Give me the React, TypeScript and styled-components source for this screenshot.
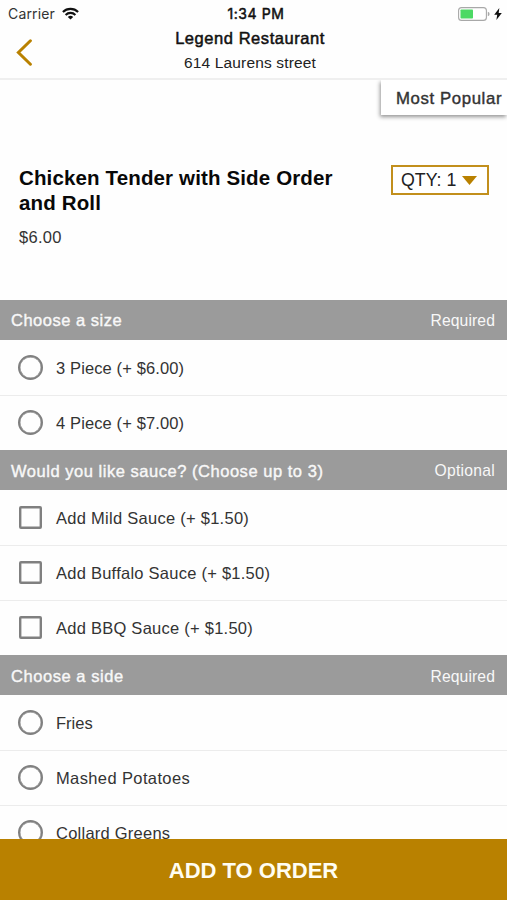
import React from "react";
import styled, { createGlobalStyle } from "styled-components";

const GOLD = "#b98100";

const GlobalStyle = createGlobalStyle`
  * { box-sizing: border-box; }
  body { margin: 0; background: #fff; overflow: hidden; }
`;

const Screen = styled.div`
  width: 507px;
  height: 900px;
  display: flex;
  flex-direction: column;
  overflow: hidden;
  background: #fefefe;
  font-family: "Liberation Sans", Arial, sans-serif;
  color: #333;
`;

const Text = styled.span<{ $size: number; $track?: number; $weight?: number; $color?: string }>`
  font-size: ${(p) => p.$size}px;
  line-height: 20px;
  letter-spacing: ${(p) => p.$track ?? 0}px;
  color: ${(p) => p.$color ?? "#333"};
  -webkit-text-stroke: ${(p) => p.$weight ?? 0}px currentColor;
  white-space: nowrap;
`;

const TopBar = styled.header`
  flex: none;
  height: 80px;
  border-bottom: 2px solid #efefef;
`;

const StatusBar = styled.div`
  height: 27px;
  display: grid;
  grid-template-columns: 1fr auto 1fr;
  align-items: center;
  padding: 0 5px 0 8px;
  font-family: Inter, sans-serif;
`;

const StatusGroup = styled.div<{ $end?: boolean }>`
  display: flex;
  align-items: center;
  gap: ${(p) => (p.$end ? 4 : 7)}px;
  justify-content: ${(p) => (p.$end ? "flex-end" : "flex-start")};
`;

const Clock = styled(Text)`
  padding-left: 2px;
`;

const NavBar = styled.div`
  height: 51px;
  display: grid;
  grid-template-columns: 60px 1fr 67px;
`;

const BackButton = styled.button`
  border: 0;
  background: none;
  padding: 12px 0 0 15px;
  display: flex;
  align-items: flex-start;
`;

const Titles = styled.div`
  display: flex;
  flex-direction: column;
  align-items: center;
  gap: 5px;
  padding-top: 1px;
`;

const Content = styled.main`
  flex: 1;
  min-height: 0;
  overflow: hidden;
`;

const Intro = styled.section`
  height: 220px;
  display: flex;
  flex-direction: column;
`;

const CategoryTab = styled.div`
  align-self: flex-end;
  width: 126px;
  height: 35px;
  padding: 9px 0 0 15px;
  display: flex;
  background: #fff;
  box-shadow: -1px 2px 4px rgba(0, 0, 0, 0.42);
  clip-path: inset(0 0 -10px -10px);
`;

const ItemRow = styled.div`
  display: flex;
  justify-content: space-between;
  align-items: flex-start;
  padding: 50px 18px 0 19px;
`;

const ItemInfo = styled.div`
  display: flex;
  flex-direction: column;
  padding-top: 1px;
`;

const ItemName = styled.h1`
  margin: 0 0 12px;
  font-size: 20.5px;
  line-height: 24.5px;
  font-weight: 700;
  letter-spacing: 0.14px;
  color: #080808;
`;

const Quantity = styled.button`
  width: 98px;
  height: 30px;
  padding: 0 0 0 8px;
  border: 2px solid #c28f1c;
  background: #fff;
  font-family: inherit;
  display: flex;
  align-items: center;
  gap: 6px;
`;

const GroupHeader = styled.div<{ $drop: number }>`
  height: 40px;
  padding: ${(p) => p.$drop}px 12px 0 11px;
  display: flex;
  align-items: center;
  justify-content: space-between;
  background: #9b9b9b;
`;

const GroupNote = styled(Text)`
  padding-top: 1px;
`;

const Option = styled.label`
  height: 55px;
  padding-left: 18px;
  display: flex;
  align-items: center;
  gap: 13px;
  & + & { box-shadow: inset 0 1px #ececec; }
`;

const Control = styled.span<{ $round: boolean }>`
  width: ${(p) => (p.$round ? 25 : 23)}px;
  height: ${(p) => (p.$round ? 25 : 23)}px;
  margin: ${(p) => (p.$round ? 0 : "0 1px")};
  border: 2px solid #808080;
  box-shadow: inset 0 0 0 0.4px #808080;
  border-radius: ${(p) => (p.$round ? "50%" : "2px")};
`;

const OptionText = styled(Text)`
  padding-top: 1px;
`;

const OrderButton = styled.button`
  flex: none;
  height: 61px;
  border: 0;
  padding: 2px 0 0;
  background: ${GOLD};
  color: #fffdf2;
  font: 700 22px/24px "Liberation Sans", Arial, sans-serif;
`;

type OptionItem = { label: string; track: number };
type Group = { title: string; track: number; drop: number; note: string; noteTrack: number; round: boolean; options: OptionItem[] };

const groups: Group[] = [
  {
    title: "Choose a size", track: 0.5, drop: 0, note: "Required", noteTrack: 0.1, round: true,
    options: [
      { label: "3 Piece (+ $6.00)", track: 0.12 },
      { label: "4 Piece (+ $7.00)", track: 0.12 },
    ],
  },
  {
    title: "Would you like sauce? (Choose up to 3)", track: 0.53, drop: 1, note: "Optional", noteTrack: 0.25, round: false,
    options: [
      { label: "Add Mild Sauce (+ $1.50)", track: 0.27 },
      { label: "Add Buffalo Sauce (+ $1.50)", track: 0.25 },
      { label: "Add BBQ Sauce (+ $1.50)", track: 0.25 },
    ],
  },
  {
    title: "Choose a side", track: 0.55, drop: 2, note: "Required", noteTrack: 0.1, round: true,
    options: [
      { label: "Fries", track: 0 },
      { label: "Mashed Potatoes", track: 0.38 },
      { label: "Collard Greens", track: 0.24 },
    ],
  },
];

const WifiIcon = () => (
  <svg width="17" height="13" viewBox="0 0 17 13" fill="none" stroke="#111" strokeWidth="2.1">
    <path d="M0.9 5a10.8 10.8 0 0 1 15.2 0" />
    <path d="M3.6 7.9a7 7 0 0 1 9.8 0" />
    <path d="M8.5 12.6 5.8 10a3.9 3.9 0 0 1 5.4 0Z" fill="#111" stroke="none" />
  </svg>
);

const BatteryIcon = () => (
  <svg width="32" height="14" viewBox="0 0 32 14">
    <rect x="0.6" y="0.6" width="27.8" height="12.8" rx="3" fill="#fff" stroke="#a8a8a8" strokeWidth="1.1" />
    <rect x="2.5" y="2.5" width="12.5" height="9" rx="0.8" fill="#4cd964" />
    <path d="M29.8 4.8q1.8.5 1.8 2.2t-1.8 2.2z" fill="#a8a8a8" />
  </svg>
);

const BoltIcon = () => (
  <svg width="8" height="12" viewBox="0 0 8 12">
    <path d="M5.3 0 0.2 6.8h3L2.4 12 7.8 4.9H4.7z" fill="#111" />
  </svg>
);

export default function App() {
  return (
    <Screen>
      <GlobalStyle />
      <TopBar>
        <StatusBar>
          <StatusGroup>
            <Text $size={14} $track={0.15}>Carrier</Text>
            <WifiIcon />
          </StatusGroup>
          <Clock $size={14} $weight={0.5} $track={0.6} $color="#111">1:34 PM</Clock>
          <StatusGroup $end>
            <BatteryIcon />
            <BoltIcon />
          </StatusGroup>
        </StatusBar>
        <NavBar>
          <BackButton aria-label="Back">
            <svg width="18" height="28" viewBox="0 0 18 28" fill="none" stroke={GOLD} strokeWidth="3">
              <path d="M15.4 1.8 3.4 13.5 15.4 25.2" strokeLinecap="round" />
            </svg>
          </BackButton>
          <Titles>
            <Text $size={16.5} $weight={0.5} $track={0.55} $color="#111">Legend Restaurant</Text>
            <Text $size={15.5} $track={0.15} $color="#222">614 Laurens street</Text>
          </Titles>
        </NavBar>
      </TopBar>
      <Content>
        <Intro>
          <CategoryTab>
            <Text $size={16.8} $weight={0.4} $track={0.6}>Most Popular</Text>
          </CategoryTab>
          <ItemRow>
            <ItemInfo>
              <ItemName>Chicken Tender with Side Order<br />and Roll</ItemName>
              <Text $size={16.5} $track={0.3}>$6.00</Text>
            </ItemInfo>
            <Quantity>
              <Text $size={17.8} $color="#222">QTY: 1</Text>
              <svg width="15" height="9" viewBox="0 0 15 9"><path d="M0 0h15L7.5 9z" fill={GOLD} /></svg>
            </Quantity>
          </ItemRow>
        </Intro>
        {groups.map((g) => (
          <section key={g.title}>
            <GroupHeader $drop={g.drop}>
              <Text $size={16.5} $weight={0.4} $track={g.track} $color="#f8f8f8">{g.title}</Text>
              <GroupNote $size={15.7} $track={g.noteTrack} $color="#f8f8f8">{g.note}</GroupNote>
            </GroupHeader>
            {g.options.map((o) => (
              <Option key={o.label}>
                <Control $round={g.round} />
                <OptionText $size={16.5} $track={o.track}>{o.label}</OptionText>
              </Option>
            ))}
          </section>
        ))}
      </Content>
      <OrderButton>ADD TO ORDER</OrderButton>
    </Screen>
  );
}
